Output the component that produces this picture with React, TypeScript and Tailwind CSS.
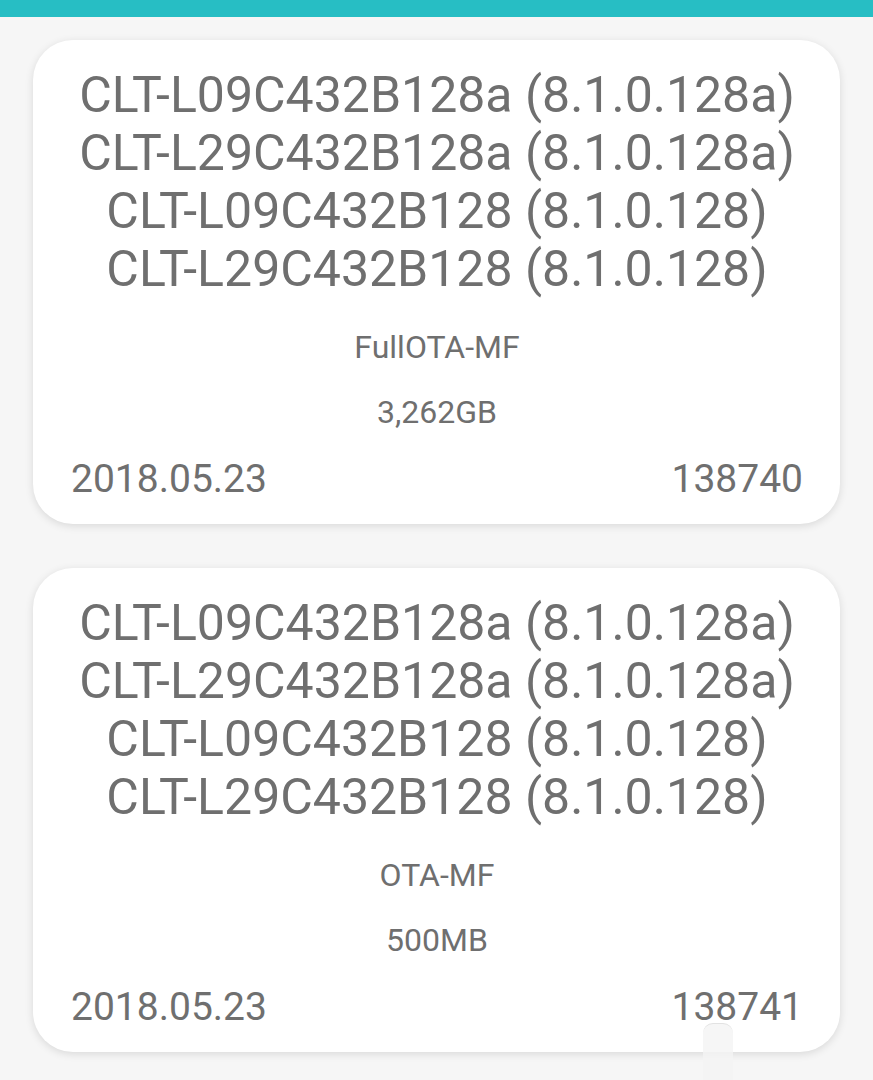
const builds = [
  {
    versions: [
      "CLT-L09C432B128a (8.1.0.128a)",
      "CLT-L29C432B128a (8.1.0.128a)",
      "CLT-L09C432B128 (8.1.0.128)",
      "CLT-L29C432B128 (8.1.0.128)",
    ],
    type: "FullOTA-MF",
    size: "3,262GB",
    date: "2018.05.23",
    id: "138740",
  },
  {
    versions: [
      "CLT-L09C432B128a (8.1.0.128a)",
      "CLT-L29C432B128a (8.1.0.128a)",
      "CLT-L09C432B128 (8.1.0.128)",
      "CLT-L29C432B128 (8.1.0.128)",
    ],
    type: "OTA-MF",
    size: "500MB",
    date: "2018.05.23",
    id: "138741",
  },
]

type Build = (typeof builds)[number]

function BuildCard({ build }: { build: Build }) {
  return (
    <div className="flex flex-col rounded-[40px] bg-white pt-[26px] pb-[25px] pl-[38px] pr-[37px] shadow-[0_2px_8px_rgba(0,0,0,0.12)]">
      <div className="flex flex-col items-center text-[50px] leading-[58px] whitespace-nowrap">
        {build.versions.map((v, i) => (
          <div key={i}>{v}</div>
        ))}
      </div>
      <div className="mt-[17px] flex flex-col items-center text-[32px] leading-[65px]">
        <div>{build.type}</div>
        <div>{build.size}</div>
      </div>
      <div className="mt-[14px] flex items-center justify-between text-[39px] leading-[40px]">
        <span>{build.date}</span>
        <span>{build.id}</span>
      </div>
    </div>
  )
}

export default function App() {
  return (
    <div className="relative h-[1080px] overflow-hidden bg-[#f6f6f6] font-['Roboto',sans-serif] text-[#6f6f6f]">
      <div className="h-[17px] bg-[#27bec4]" />
      <div className="flex flex-col gap-[44px] px-[33px] pt-[23px]">
        {builds.map((b) => (
          <BuildCard key={b.id} build={b} />
        ))}
      </div>
      {/* fast-scroll handle */}
      <div className="absolute left-[703px] top-[1023px] h-[70px] w-[30px] rounded-t-[10px] border-t border-[#e2e2e2] bg-[#f4f4f4]/80" />
    </div>
  )
}
